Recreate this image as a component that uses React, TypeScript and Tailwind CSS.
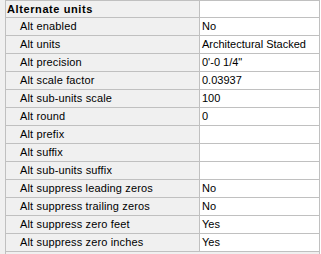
const rows: [string, string][] = [
  ['Alt enabled', 'No'],
  ['Alt units', 'Architectural Stacked'],
  ['Alt precision', '0\'-0 1/4"'],
  ['Alt scale factor', '0.03937'],
  ['Alt sub-units scale', '100'],
  ['Alt round', '0'],
  ['Alt prefix', ''],
  ['Alt suffix', ''],
  ['Alt sub-units suffix', ''],
  ['Alt suppress leading zeros', 'No'],
  ['Alt suppress trailing zeros', 'No'],
  ['Alt suppress zero feet', 'Yes'],
  ['Alt suppress zero inches', 'Yes'],
]

export default function App () {
  return (
    <div className="w-[321px] h-[254px] bg-white overflow-hidden text-[11px] text-black" style={{ fontFamily: '"Liberation Sans", Arial, sans-serif' }}>
      <div className="flex w-[320px] h-[254px] bg-[#f0f0f0]">
        <div className="w-[5px] shrink-0" />
        <div className="flex-1 border-l border-r border-[#c0c0c0]">
          <div className="flex h-[18px] border-t border-b border-[#c0c0c0]">
            <div className="w-[193px] shrink-0 pl-[1px] flex items-center font-bold tracking-[0.6px]">Alternate units</div>
            <div className="flex-1 bg-white border-l border-[#c0c0c0]" />
          </div>
          {rows.map(([name, value], i) => (
            <div key={i} className="flex h-[18px] border-b border-[#c0c0c0]">
              <div className="w-[193px] shrink-0 pl-[14px] flex items-center tracking-[0.15px]">{name}</div>
              <div className="flex-1 bg-white border-l border-[#c0c0c0] pl-[2px] flex items-center">{value}</div>
            </div>
          ))}
        </div>
      </div>
    </div>
  )
}
